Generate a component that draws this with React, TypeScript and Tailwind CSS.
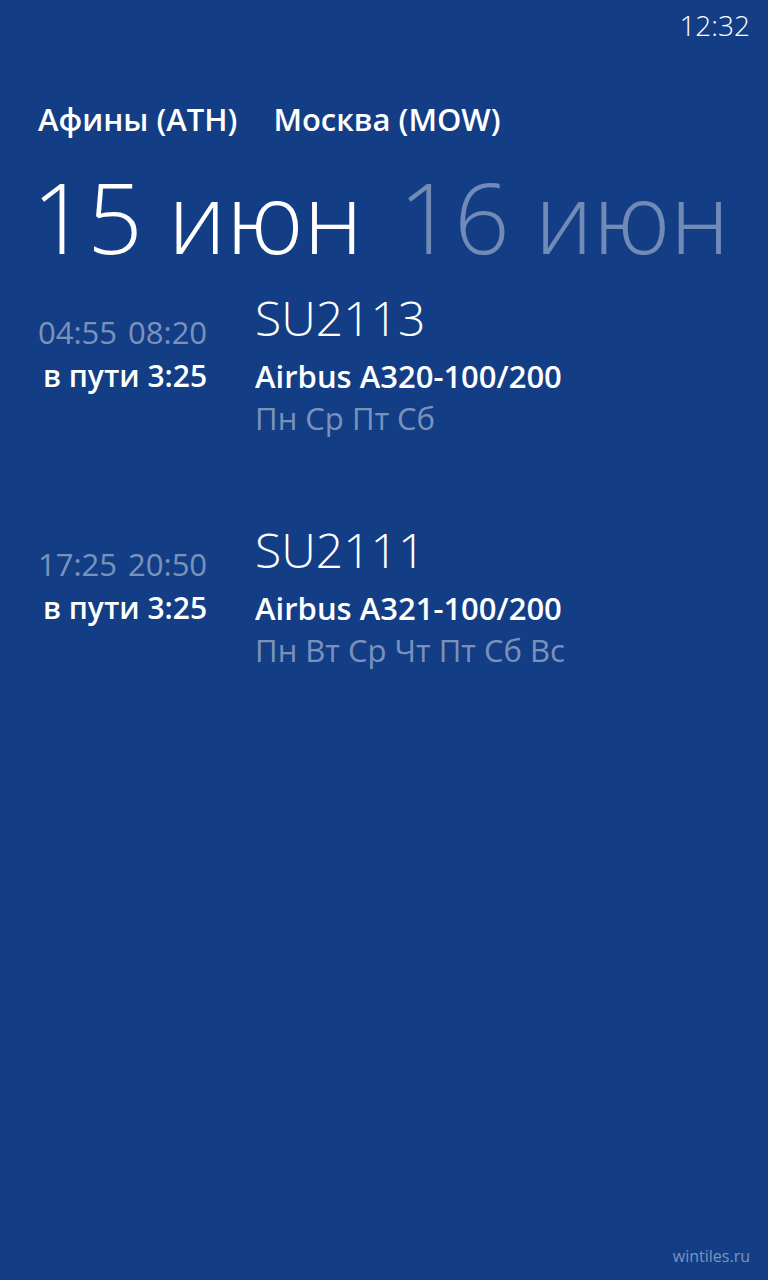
import React from 'react';

interface Flight {
  code: string;
  dep: string;
  arr: string;
  duration: string;
  plane: string;
  days: string;
}

const flights: Flight[] = [
  { code: 'SU2113', dep: '04:55', arr: '08:20', duration: 'в пути 3:25', plane: 'Airbus A320-100/200', days: 'Пн Ср Пт Сб' },
  { code: 'SU2111', dep: '17:25', arr: '20:50', duration: 'в пути 3:25', plane: 'Airbus A321-100/200', days: 'Пн Вт Ср Чт Пт Сб Вс' },
];

// times | code, duration | plane, blank | days
const FlightRow: React.FC<{ flight: Flight }> = ({ flight }) => (
  <div className="grid grid-cols-[auto_auto] justify-start gap-x-[48px]">
    <div className="self-end flex gap-[11px] text-[31px] leading-[46px] text-white/45">
      <span>{flight.dep}</span>
      <span>{flight.arr}</span>
    </div>
    <div className="text-[48px] leading-[75px] font-light text-white">{flight.code}</div>

    <div className="justify-self-end text-[30px] leading-[42px] font-semibold text-white">{flight.duration}</div>
    <div className="text-[31px] leading-[42px] font-semibold text-white">{flight.plane}</div>

    <div />
    <div className="text-[31px] leading-[42px] text-white/45">{flight.days}</div>
  </div>
);

export default function App() {
  return (
    <div
      className="w-[768px] h-[1280px] bg-[#133e86] text-white flex flex-col overflow-hidden"
      style={{ fontFamily: '"Open Sans", "Noto Sans", sans-serif' }}
    >
      {/* status bar */}
      <div className="flex justify-end pr-[18px] pt-[5px] text-[28px] leading-[40px] font-light">12:32</div>

      {/* route */}
      <div className="flex gap-[36px] px-[38px] mt-[54px] text-[31px] leading-[40px] font-semibold whitespace-nowrap">
        <span>Афины (ATH)</span>
        <span>Москва (MOW)</span>
      </div>

      {/* dates */}
      <div className="flex gap-[36px] pl-[32px] mt-[22px] text-[97px] leading-[110px] font-light whitespace-nowrap">
        <span>15 июн</span>
        <span className="text-white/40">16 июн</span>
      </div>

      {/* flights */}
      <div className="flex flex-col gap-[73px] px-[38px] mt-[9px]">
        {flights.map((f) => (
          <FlightRow key={f.code} flight={f} />
        ))}
      </div>

      <div className="mt-auto flex justify-end pr-[18px] pb-[12px] text-[16px] leading-[24px] text-white/45">wintiles.ru</div>
    </div>
  );
}
